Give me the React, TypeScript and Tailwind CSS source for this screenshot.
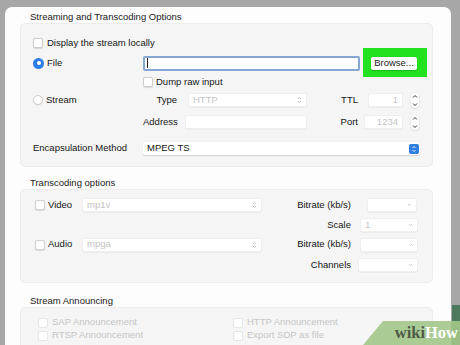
import type { ReactNode } from 'react';

const font = { fontFamily: '"Liberation Sans", Arial, sans-serif' };

function Checkbox({ faded = false }: { faded?: boolean }) {
  return (
    <span
      className={`shrink-0 w-[10px] h-[10px] rounded-[2px] bg-white border ${
        faded ? 'border-[#e6e6e6]' : 'border-[#cfcfcf] shadow-[0_0.5px_1px_rgba(0,0,0,0.12)]'
      }`}
    />
  );
}

function Radio({ on = false }: { on?: boolean }) {
  if (on) {
    return (
      <span className="shrink-0 w-[11px] h-[11px] rounded-full bg-[#2b7de9] flex items-center justify-center">
        <span className="w-[4px] h-[4px] rounded-full bg-white" />
      </span>
    );
  }
  return <span className="shrink-0 w-[10px] h-[10px] rounded-full bg-white border border-[#d2d2d2] shadow-[0_0.5px_1px_rgba(0,0,0,0.1)]" />;
}

function UpDown() {
  return (
    <svg width="5" height="8" viewBox="0 0 5 8" className="shrink-0">
      <path d="M1 3 L2.5 1.5 L4 3 M1 5 L2.5 6.5 L4 5" fill="none" stroke="#b5b5b5" strokeWidth="0.8" />
    </svg>
  );
}

function Down() {
  return (
    <svg width="5" height="4" viewBox="0 0 5 4" className="shrink-0">
      <path d="M1 1 L2.5 2.5 L4 1" fill="none" stroke="#bdbdbd" strokeWidth="0.8" />
    </svg>
  );
}

function Stepper() {
  return (
    <span className="ml-[8px] shrink-0 w-[8px] h-[15px] rounded-[3px] bg-white shadow-[0_0.5px_1.5px_rgba(0,0,0,0.2)] flex flex-col items-center justify-between py-[1px]">
      <svg width="6" height="5" viewBox="0 0 6 5">
        <path d="M1 3.5 L3 1.5 L5 3.5" fill="none" stroke="#333" strokeWidth="1" />
      </svg>
      <svg width="6" height="5" viewBox="0 0 6 5">
        <path d="M1 1.5 L3 3.5 L5 1.5" fill="none" stroke="#333" strokeWidth="1" />
      </svg>
    </span>
  );
}

function Field({ className = '', children }: { className?: string; children?: ReactNode }) {
  return (
    <span
      className={`shrink-0 h-[14px] bg-white rounded-[2px] border border-[#efefef] shadow-[0_0.5px_0.5px_rgba(0,0,0,0.08)] flex items-center px-[4px] text-[#c4c4c4] ${className}`}
    >
      {children}
    </span>
  );
}

function Title({ children, className = '' }: { children: ReactNode; className?: string }) {
  return <div className={`pl-[10px] h-[12px] leading-[12px] text-[#1a1a1a] ${className}`}>{children}</div>;
}

export default function App() {
  return (
    <div className="relative w-[460px] h-[345px] overflow-hidden bg-[#a7a7a7] pl-[5px] pt-[7px] text-[9.5px]" style={font}>
      <div className="w-[446px] h-[360px] bg-[#fdfdfd] rounded-t-[7px] pl-[15px] pr-[18px] pt-[4px] text-[#161616]">
        <Title>Streaming and Transcoding Options</Title>

        <div className="bg-[#f5f5f5] border border-[#ececec] rounded-[5px] pl-[12px] pt-[9px] pb-[5px]">
          <div className="h-[20px] flex items-center gap-[4px]">
            <Checkbox />
            <span>Display the stream locally</span>
          </div>

          <div className="h-[20px] flex items-center">
            <div className="w-[110px] flex items-center gap-[3px]">
              <Radio on />
              <span>File</span>
            </div>
            <span className="w-[217px] h-[15px] bg-white rounded-[2px] border-2 border-[#87a6d2] flex items-center pl-[2px]">
              <span className="w-px h-[10px] bg-[#222]" />
            </span>
            <div className="relative ml-[11px]">
              <span className="absolute left-[-8px] right-[-10px] top-[-9px] bottom-[-7px] bg-[#22e11f]" />
              <span className="relative flex items-center justify-center w-[46px] h-[13px] bg-white rounded-[2px] shadow-[0_0.5px_1px_rgba(0,0,0,0.2)] text-[#222]">
                Browse...
              </span>
            </div>
          </div>

          <div className="h-[18px] flex items-center">
            <div className="w-[110px]" />
            <Checkbox />
            <span className="ml-[3px]">Dump raw input</span>
          </div>

          <div className="h-[18px] flex items-center">
            <div className="w-[110px] flex items-center gap-[3px]">
              <Radio />
              <span>Stream</span>
            </div>
            <span className="w-[34px] text-right whitespace-nowrap">Type</span>
            <Field className="ml-[11px] w-[119px] justify-between">
              <span>HTTP</span>
              <UpDown />
            </Field>
            <span className="w-[51px] text-right">TTL</span>
            <Field className="ml-[10px] w-[35px] justify-end">1</Field>
            <Stepper />
          </div>

          <div className="h-[26px] flex items-center">
            <div className="w-[110px]" />
            <span className="w-[34px] whitespace-nowrap">Address</span>
            <Field className="ml-[8px] w-[122px]" />
            <span className="w-[51px] text-right">Port</span>
            <Field className="ml-[6px] w-[39px] justify-end">1234</Field>
            <Stepper />
          </div>

          <div className="h-[26px] flex items-center pt-[1px]">
            <span className="w-[110px] whitespace-nowrap">Encapsulation Method</span>
            <span className="w-[277px] h-[13px] bg-white rounded-[2px] shadow-[0_0.5px_1px_rgba(0,0,0,0.15)] flex items-center justify-between pl-[4px] pr-[1px]">
              <span className="text-[#161616]">MPEG TS</span>
              <span className="w-[10px] h-[10px] rounded-[2px] bg-[#2f7fe0] flex items-center justify-center">
                <svg width="6" height="8" viewBox="0 0 6 8">
                  <path d="M1.5 3 L3 1.5 L4.5 3 M1.5 5 L3 6.5 L4.5 5" fill="none" stroke="#fff" strokeWidth="0.9" />
                </svg>
              </span>
            </span>
          </div>
        </div>

        <Title className="mt-[10px] h-[11px]">Transcoding options</Title>

        <div className="bg-[#f5f5f5] border border-[#ececec] rounded-[5px] pl-[14px] pt-[5px] pb-[6px]">
          <div className="h-[20px] flex items-center">
            <div className="w-[47px] flex items-center gap-[3px]">
              <Checkbox />
              <span>Video</span>
            </div>
            <Field className="w-[180px] justify-between">
              <span>mp1v</span>
              <UpDown />
            </Field>
            <span className="w-[89px] text-right">Bitrate (kb/s)</span>
            <Field className="ml-[16px] w-[50px] justify-end">
              <Down />
            </Field>
          </div>
          <div className="h-[20px] flex items-center">
            <div className="w-[227px]" />
            <span className="w-[89px] text-right">Scale</span>
            <Field className="ml-[9px] w-[58px] justify-between">
              <span>1</span>
              <Down />
            </Field>
          </div>
          <div className="h-[19px] flex items-center">
            <div className="w-[47px] flex items-center gap-[3px]">
              <Checkbox />
              <span>Audio</span>
            </div>
            <Field className="w-[180px] justify-between">
              <span>mpga</span>
              <UpDown />
            </Field>
            <span className="w-[89px] text-right">Bitrate (kb/s)</span>
            <Field className="ml-[9px] w-[58px] justify-end">
              <Down />
            </Field>
          </div>
          <div className="h-[22px] flex items-center">
            <div className="w-[227px]" />
            <span className="w-[89px] text-right">Channels</span>
            <Field className="ml-[7px] w-[60px] justify-end">
              <Down />
            </Field>
          </div>
        </div>

        <Title className="mt-[12px]">Stream Announcing</Title>

        <div className="h-[60px] bg-[#f5f5f5] border border-[#ececec] rounded-[5px] pl-[17px] pt-[8px] text-[#c6c6c6]">
          <div className="flex">
            <div className="w-[195px]">
              <div className="h-[13px] flex items-center gap-[4px]">
                <Checkbox faded />
                <span>SAP Announcement</span>
              </div>
              <div className="h-[13px] flex items-center gap-[4px]">
                <Checkbox faded />
                <span>RTSP Announcement</span>
              </div>
            </div>
            <div>
              <div className="h-[13px] flex items-center gap-[4px]">
                <Checkbox faded />
                <span>HTTP Announcement</span>
              </div>
              <div className="h-[13px] flex items-center gap-[4px]">
                <Checkbox faded />
                <span>Export SDP as file</span>
              </div>
            </div>
          </div>
        </div>
      </div>

      <div className="absolute right-0 top-[305px] bottom-0 w-[8px] bg-[#4c7a5d]" />
      <div className="absolute right-0 bottom-0 w-[97px] h-[24px] bg-[#a3c78a]/90 [clip-path:polygon(20px_0,100%_0,100%_100%,0_100%)] flex items-center justify-end pr-[2px]">
        <span className="text-[16.5px] font-bold leading-none" style={{ fontFamily: '"Liberation Serif", "Times New Roman", serif' }}>
          <span className="text-[#4f5a48]">wiki</span>
          <span className="text-white">How</span>
        </span>
      </div>
    </div>
  );
}
